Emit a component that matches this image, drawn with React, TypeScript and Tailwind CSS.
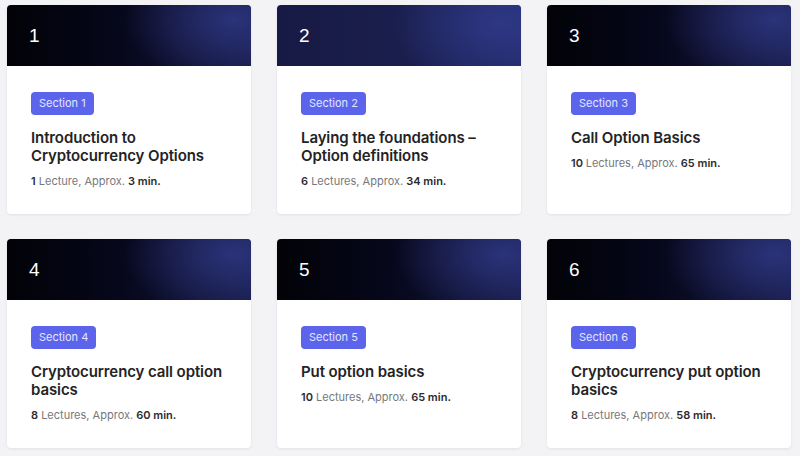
import React from 'react';

type Section = {
    n: number;
    title: string;
    count: string;
    unit: string;
    mins: string;
    header: string;
};

const darkHeader =
    'bg-[radial-gradient(ellipse_45%_110%_at_93%_25%,rgba(44,52,124,0.95)_0%,rgba(44,52,124,0)_100%),linear-gradient(90deg,#020207_0%,#06071a_45%,#161a45_100%)]';
const navyHeader =
    'bg-[radial-gradient(ellipse_45%_110%_at_92%_30%,rgba(46,56,134,0.95)_0%,rgba(46,56,134,0)_100%),linear-gradient(90deg,#171a44_0%,#1a1e4c_50%,#232a68_100%)]';

const sections: Section[] = [
    { n: 1, title: 'Introduction to Cryptocurrency Options', count: '1', unit: 'Lecture', mins: '3', header: darkHeader },
    { n: 2, title: 'Laying the foundations – Option definitions', count: '6', unit: 'Lectures', mins: '34', header: navyHeader },
    { n: 3, title: 'Call Option Basics', count: '10 ', unit: 'Lectures', mins: '65', header: darkHeader },
    { n: 4, title: 'Cryptocurrency call option basics', count: '8', unit: 'Lectures', mins: '60', header: darkHeader },
    { n: 5, title: 'Put option basics', count: '10', unit: 'Lectures', mins: '65', header: darkHeader },
    { n: 6, title: 'Cryptocurrency put option basics', count: '8', unit: 'Lectures', mins: '58', header: darkHeader },
];

function SectionCard({ s }: { s: Section }) {
    return (
        <div className="bg-white rounded-[4px] overflow-hidden shadow-[0_1px_3px_rgba(20,20,40,0.08)] flex flex-col">
            <div className={`h-[61px] flex items-center px-[22px] ${s.header}`}>
                <span className="text-white text-[19px] leading-none font-['Liberation_Sans',sans-serif]">{s.n}</span>
            </div>
            <div className="pl-6 pr-4 pt-[26px] pb-[25px] flex flex-col items-start">
                <span className="block bg-[#5c64ec] text-[#e4e6ff] text-[11px] leading-[23px] h-[23px] px-[8px] rounded-[4px]">
                    Section {s.n}
                </span>
                <h3 className="mt-[14px] text-[15px] leading-[18px] font-semibold tracking-[-0.1px] text-[#232325]">
                    {s.title}
                </h3>
                <p className="mt-[8px] text-[11px] leading-[16px] text-[#77777c]">
                    <span className="font-semibold text-[#2b2b2e]">{s.count}</span> {s.unit}, Approx.{' '}
                    <span className="font-semibold text-[#2b2b2e]">{s.mins} min.</span>
                </p>
            </div>
        </div>
    );
}

export default function App() {
    return (
        <div className="min-h-[456px] bg-[#f3f3f6] font-['Inter',sans-serif] pt-[5px] px-[7px]">
            <div className="grid grid-cols-[244px_244px_244px] gap-x-[26px] gap-y-[25px]">
                {sections.map((s) => (
                    <SectionCard key={s.n} s={s} />
                ))}
            </div>
        </div>
    );
}
